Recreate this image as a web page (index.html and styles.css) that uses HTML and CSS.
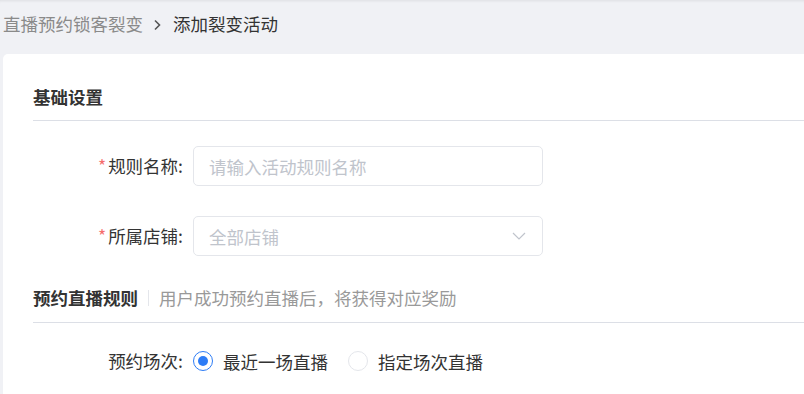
FILE: index.html
```html
<!DOCTYPE html>
<html lang="zh-CN">
<head>
    <meta charset="UTF-8">
    <meta name="viewport" content="width=device-width, initial-scale=1.0">
    <title>添加裂变活动</title>
    <link rel="stylesheet" href="styles.css">
</head>
<body>
    <div class="breadcrumb">
        <span class="crumb">直播预约锁客裂变</span>
        <svg class="crumb-sep" width="10" height="12" viewBox="0 0 10 12">
            <path d="M3 1.5 L7.5 6 L3 10.5" fill="none" stroke="#555" stroke-width="1.6"/>
        </svg>
        <span class="crumb current">添加裂变活动</span>
    </div>

    <div class="card">
        <div class="section-title">基础设置</div>

        <div class="form-item first">
            <label class="form-label"><span class="req">*</span>规则名称:</label>
            <div class="input">
                <span class="placeholder">请输入活动规则名称</span>
            </div>
        </div>

        <div class="form-item">
            <label class="form-label"><span class="req">*</span>所属店铺:</label>
            <div class="input select">
                <span class="placeholder">全部店铺</span>
                <svg class="arrow" width="14" height="8" viewBox="0 0 14 8">
                    <path d="M1 1 L7 7 L13 1" fill="none" stroke="#c0c4cc" stroke-width="1.2"/>
                </svg>
            </div>
        </div>

        <div class="section-title second">
            预约直播规则
            <span class="title-sep"></span>
            <span class="title-desc">用户成功预约直播后，将获得对应奖励</span>
        </div>

        <div class="form-item radio-row">
            <label class="form-label">预约场次:</label>
            <div class="radio-group">
                <span class="radio checked"><span class="dot"></span></span>
                <span class="radio-text">最近一场直播</span>
                <span class="radio"></span>
                <span class="radio-text">指定场次直播</span>
            </div>
        </div>
    </div>
</body>
</html>
```

FILE: styles.css
```css
body {
    font-family: "Noto Sans CJK SC", "Noto Sans", sans-serif;
    font-size: 17.5px;
    color: #333;
    background-color: #f0f1f5;
    margin: 0;
    padding: 0;
    box-shadow: inset 0 3px 3px -2px rgba(0, 0, 0, 0.08);
    height: 394px;
    overflow: hidden;
}
.breadcrumb {
    display: flex;
    align-items: center;
    height: 54px;
    padding-left: 3px;
    padding-bottom: 6px;
    box-sizing: border-box;
}
.crumb {
    color: #8a8a8a;
    line-height: 24px;
}
.crumb.current {
    color: #333;
}
.crumb-sep {
    margin: 2px 11px 0 9px;
}
.card {
    margin-left: 3px;
    background-color: #ffffff;
    border-top-left-radius: 5px;
    padding-left: 30px;
    height: 340px;
}
.section-title {
    display: flex;
    align-items: center;
    font-weight: bold;
    line-height: 24px;
    padding: 31px 0 11px;
    border-bottom: 1px solid #dcdfe6;
}
.section-title.second {
    padding: 30px 0 12px;
}
.title-sep {
    width: 1px;
    height: 16px;
    background-color: #e4e6eb;
    margin: 0 10px;
}
.title-desc {
    font-weight: normal;
    color: #999;
}
.form-item {
    display: flex;
    align-items: center;
    margin-top: 30px;
}
.form-item.first {
    margin-top: 25px;
}
.form-label {
    width: 160px;
    padding-right: 10px;
    box-sizing: border-box;
    text-align: right;
    line-height: 24px;
}
.req {
    color: #f56c6c;
    margin-right: 2px;
}
.input {
    display: flex;
    align-items: center;
    justify-content: space-between;
    width: 350px;
    height: 40px;
    padding: 0 16px 0 15px;
    box-sizing: border-box;
    border: 1px solid #e4e6eb;
    border-radius: 5px;
}
.placeholder {
    color: #c0c4cc;
}
.radio-row {
    margin-top: 18px;
    height: 40px;
}
.radio-group {
    display: flex;
    align-items: center;
}
.radio {
    display: flex;
    align-items: center;
    justify-content: center;
    width: 20px;
    height: 20px;
    box-sizing: border-box;
    border: 1px solid #e4e6eb;
    border-radius: 50%;
}
.radio.checked {
    border-color: #2d7cf6;
}
.dot {
    width: 10px;
    height: 10px;
    border-radius: 50%;
    background-color: #2d7cf6;
}
.radio-text {
    margin: 0 20px 0 10px;
}
```
